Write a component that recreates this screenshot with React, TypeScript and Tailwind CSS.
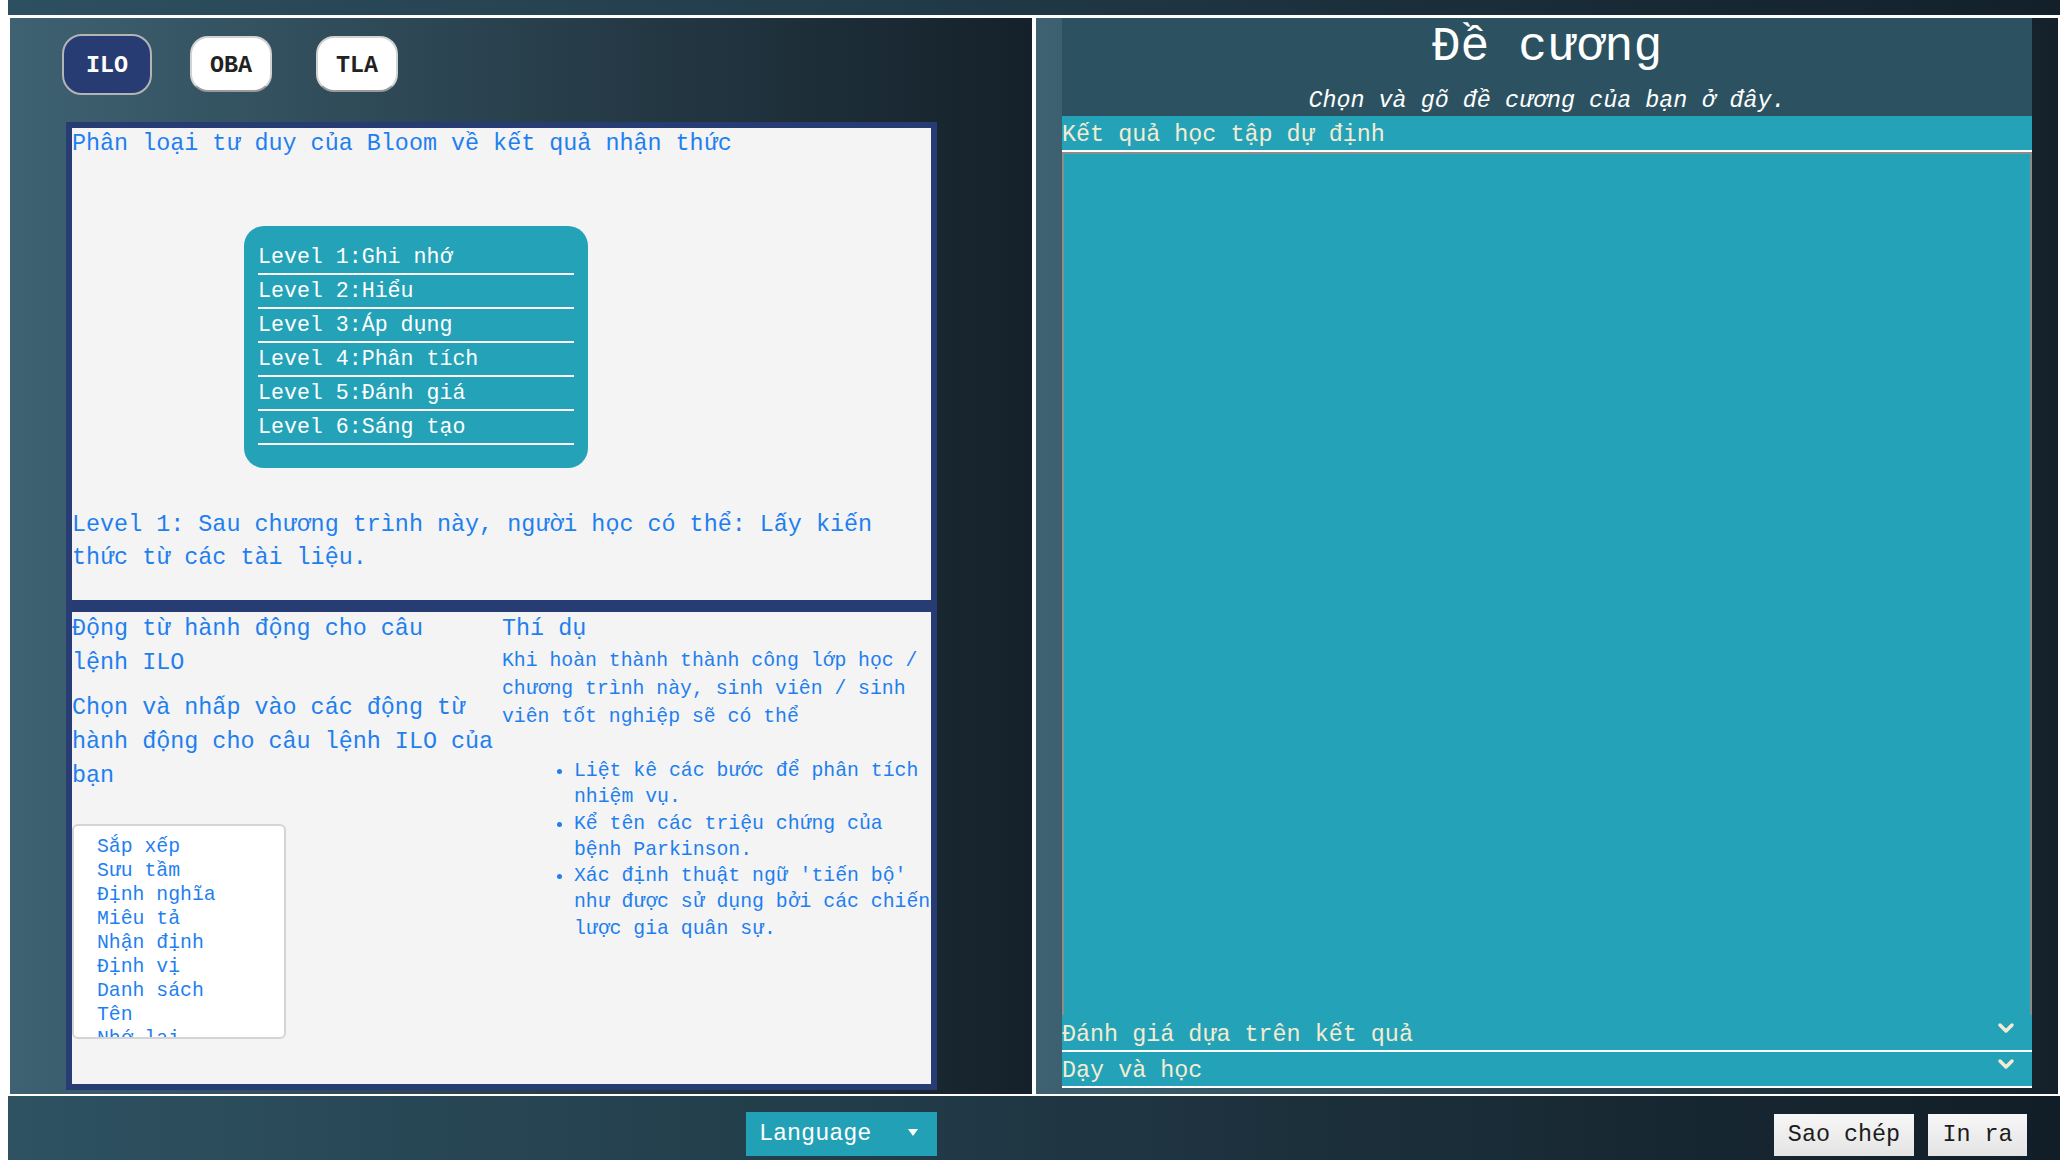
import React from "react";

const levels = [
  "Level 1:Ghi nhớ",
  "Level 2:Hiểu",
  "Level 3:Áp dụng",
  "Level 4:Phân tích",
  "Level 5:Đánh giá",
  "Level 6:Sáng tạo",
];

const verbs = [
  "Sắp xếp",
  "Sưu tầm",
  "Định nghĩa",
  "Miêu tả",
  "Nhận định",
  "Định vị",
  "Danh sách",
  "Tên",
  "Nhớ lại",
  "Nhắc lại",
  "Kể lại",
  "Trích dẫn",
];

function Chevron() {
  return (
    <svg width="18" height="12" viewBox="0 0 18 12" className="block">
      <polyline
        points="3,3 9,9 15,3"
        fill="none"
        stroke="#f4ecd2"
        strokeWidth="3.5"
        strokeLinecap="round"
        strokeLinejoin="round"
      />
    </svg>
  );
}

function Caret() {
  return (
    <svg width="10" height="7" viewBox="0 0 10 7" className="block">
      <polygon points="0,0 10,0 5,7" fill="#ffffff" />
    </svg>
  );
}

export default function App() {
  return (
    <div className="w-[2060px] h-[1160px] bg-white overflow-hidden font-['Liberation_Mono','Courier_New',monospace]">
      {/* top bar */}
      <div className="ml-[8px] h-[15px] bg-linear-to-r from-[#2d5060] to-[#13202a]" />

      {/* main */}
      <div className="mt-[3px] ml-[10px] flex gap-[4px] h-[1076px]">
        {/* left panel */}
        <div className="w-[1022px] h-full bg-linear-to-r from-[#3e6272] to-[#15212a] pl-[56px] pt-[18px]">
          <div className="flex items-center h-[56px]">
            <button className="-ml-[4px] w-[90px] h-[61px] rounded-[20px] bg-[#283c74] border-2 border-[#b4b4b4] text-white text-[23.4px] leading-[28px] pt-[4px] font-bold">
              ILO
            </button>
            <button className="ml-[38px] w-[82px] h-[56px] rounded-[18px] bg-white border-2 border-[#d2d2d2] border-b-[#9a9a9a] text-[#222222] text-[23.4px] leading-[28px] pt-[4px] font-bold">
              OBA
            </button>
            <button className="ml-[44px] w-[82px] h-[56px] rounded-[18px] bg-white border-2 border-[#d2d2d2] border-b-[#9a9a9a] text-[#222222] text-[23.4px] leading-[28px] pt-[4px] font-bold">
              TLA
            </button>
          </div>

          <div className="mt-[30px] w-[871px]">
            {/* section 1 */}
            <div className="h-[484px] border-[6px] border-[#283c74] bg-[#f4f4f4] text-[#1f7fef]">
              <div className="text-[23.4px] leading-[32px] whitespace-nowrap">
                Phân loại tư duy của Bloom về kết quả nhận thức
              </div>
              <div className="ml-[172px] mt-[66px] w-[344px] h-[242px] rounded-[20px] bg-[#24a3b8] px-[14px] pt-[15px]">
                {levels.map((l) => (
                  <div
                    key={l}
                    className="text-white text-[21.6px] leading-[32px] border-b-2 border-white whitespace-nowrap"
                  >
                    {l}
                  </div>
                ))}
              </div>
              <div className="mt-[41px] text-[23.4px] leading-[33px] whitespace-nowrap">
                Level 1: Sau chương trình này, người học có thể: Lấy kiến
                <br />
                thức từ các tài liệu.
              </div>
            </div>

            {/* section 2 */}
            <div className="h-[484px] border-[6px] border-t-0 border-[#283c74] bg-[#f4f4f4] text-[#1f7fef] flex">
              <div className="w-[430px] shrink-0 flex flex-col">
                <div className="h-[6px] bg-[#283c74]" />
                <div className="text-[23.4px] leading-[34px] whitespace-nowrap">
                  Động từ hành động cho câu
                  <br />
                  lệnh ILO
                </div>
                <div className="mt-[11px] text-[23.4px] leading-[34px] whitespace-nowrap">
                  Chọn và nhấp vào các động từ
                  <br />
                  hành động cho câu lệnh ILO của
                  <br />
                  bạn
                </div>
                <div className="mt-[31px] w-[214px] h-[215px] border-2 border-[#d4d4d4] rounded-[6px] bg-white pl-[23px] pt-[9px] overflow-hidden text-[19.8px] leading-[24px]">
                  {verbs.map((v) => (
                    <div key={v} className="whitespace-nowrap">
                      {v}
                    </div>
                  ))}
                </div>
              </div>
              <div className="flex-1 flex flex-col">
                <div className="h-[6px] bg-[#283c74]" />
                <div className="text-[23.4px] leading-[34px] whitespace-nowrap">
                  Thí dụ
                </div>
                <div className="mt-[1px] text-[19.8px] leading-[28px] whitespace-nowrap">
                  Khi hoàn thành thành công lớp học /
                  <br />
                  chương trình này, sinh viên / sinh
                  <br />
                  viên tốt nghiệp sẽ có thể
                </div>
                <ul className="mt-[27px] list-disc pl-[72px] text-[19.8px] leading-[26.3px]">
                  <li className="whitespace-nowrap">
                    Liệt kê các bước để phân tích
                    <br />
                    nhiệm vụ.
                  </li>
                  <li className="whitespace-nowrap">
                    Kể tên các triệu chứng của
                    <br />
                    bệnh Parkinson.
                  </li>
                  <li className="whitespace-nowrap">
                    Xác định thuật ngữ 'tiến bộ'
                    <br />
                    như được sử dụng bởi các chiến
                    <br />
                    lược gia quân sự.
                  </li>
                </ul>
              </div>
            </div>
          </div>
        </div>

        {/* right panel */}
        <div className="w-[1022px] h-full bg-linear-to-r from-[#3e6272] to-[#15212a] px-[26px]">
          <div className="w-[970px] h-[1070px] bg-[#2c5261] flex flex-col">
            <div className="h-[98px] text-center text-white">
              <div className="pt-[5px] text-[48px] leading-[48px]">Đề cương</div>
              <div className="mt-[16px] italic text-[23.4px] leading-[28px]">
                Chọn và gõ đề cương của bạn ở đây.
              </div>
            </div>
            <div className="h-[36px] bg-[#24a3b8] border-b-2 border-white text-[#f4ecd2] text-[23.4px] leading-[30px] pt-[4px] whitespace-nowrap">
              Kết quả học tập dự định
            </div>
            <textarea className="block w-full h-[863px] resize-none bg-[#24a3b8] border-x-2 border-t-2 border-[#8c8c8c] outline-none" />
            <div className="h-[37px] bg-[#24a3b8] border-b-2 border-white flex items-center justify-between text-[#f4ecd2] text-[23.4px]">
              <span className="whitespace-nowrap pt-[5px] leading-[30px]">Đánh giá dựa trên kết quả</span>
              <span className="mr-[17px] -mt-[10px]">
                <Chevron />
              </span>
            </div>
            <div className="h-[36px] bg-[#24a3b8] border-b-2 border-white flex items-center justify-between text-[#f4ecd2] text-[23.4px]">
              <span className="whitespace-nowrap pt-[5px] leading-[29px]">Dạy và học</span>
              <span className="mr-[17px] -mt-[10px]">
                <Chevron />
              </span>
            </div>
          </div>
        </div>
      </div>

      {/* footer */}
      <div className="mt-[2px] ml-[8px] h-[64px] bg-linear-to-r from-[#2e5262] to-[#121e27] flex items-end pb-[4px]">
        <div className="ml-[738px] w-[191px] h-[44px] bg-[#22a0b5] flex items-center pl-[13px] text-white text-[23.4px]">
          <span className="pt-[2px]">Language</span>
          <span className="ml-auto mr-[19px] -mt-[4px]">
            <Caret />
          </span>
        </div>
        <div className="ml-auto mr-[33px] flex gap-[14px]">
          <button className="w-[140px] h-[42px] bg-linear-to-b from-[#f7f7f7] to-[#e4e4e4] text-[#1c1c1c] text-[23.4px] pt-[2px]">
            Sao chép
          </button>
          <button className="w-[99px] h-[42px] bg-linear-to-b from-[#f7f7f7] to-[#e4e4e4] text-[#1c1c1c] text-[23.4px] pt-[2px]">
            In ra
          </button>
        </div>
      </div>
    </div>
  );
}
